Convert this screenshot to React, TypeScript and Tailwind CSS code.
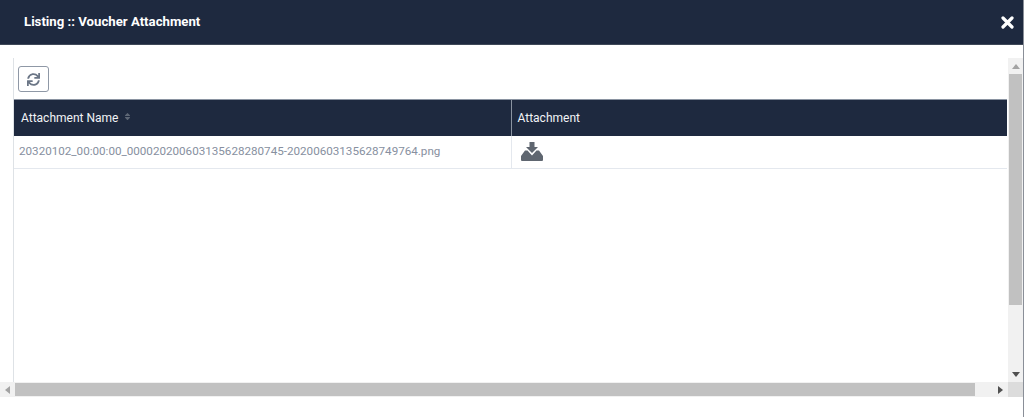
import React from 'react';
import { FaSync, FaSort } from 'react-icons/fa';

function Arrow({ dir }: { dir: 'up' | 'down' | 'left' | 'right' }) {
  const points = {
    up: '0,5 4,0 8,5',
    down: '0,0 8,0 4,5',
    left: '5,0 5,8 0,4',
    right: '0,0 5,4 0,8'
  }[dir];
  const box = dir === 'up' || dir === 'down' ? '0 0 8 5' : '0 0 5 8';
  const size = dir === 'up' || dir === 'down' ? 'w-2 h-[5px]' : 'w-[5px] h-2';
  const color = dir === 'up' || dir === 'left' ? 'fill-[#a3a3a3]' : 'fill-[#505050]';
  return (
    <svg viewBox={box} className={`${size} ${color}`}>
      <polygon points={points} />
    </svg>
  );
}

function DownloadIcon() {
  return (
    <svg viewBox="0 0 22 19" className="w-[22px] h-[19px] fill-[#5f6670]">
      <path d="M8.5 0H13.5V5H17L11 11L5 5H8.5Z" />
      <path d="M0 14L4 8.5H6.5L11 13.5L15.5 8.5H18L22 14V18Q22 19 21 19H1Q0 19 0 18Z" />
    </svg>
  );
}

export default function App() {
  return (
    <div className="w-[1024px] h-[417px] overflow-hidden bg-white flex flex-col border-r border-[#8a8f98] font-['Roboto',sans-serif]">
      <div className="h-[45px] shrink-0 bg-[#1e293f] border-b border-[#3f4858] flex items-center justify-between pl-6 pr-[9px]">
        <h4 className="text-[13.2px] font-bold text-white leading-none">Listing :: Voucher Attachment</h4>
        <svg viewBox="0 0 13 13" className="w-[13px] h-[13px] stroke-white">
          <path d="M2 2L11 11M11 2L2 11" strokeWidth="3.2" strokeLinecap="round" />
        </svg>
      </div>

      <div className="pt-[13px] pl-[13px] flex flex-col">
        <div className="h-[324px] flex border-l border-[#dee2e6]">
          <div className="w-[994px] shrink-0 flex flex-col">
            <div className="pt-2 pl-1 h-[41px] shrink-0">
              <button className="w-[31px] h-[26px] rounded-[3px] border border-[#8f98a6] bg-white flex items-center justify-center">
                <FaSync className="w-[13px] h-[13px] text-[#6b7686]" />
              </button>
            </div>
            <table className="w-[993px] table-fixed border-collapse text-[12px]">
              <thead>
                <tr className="h-[36px] bg-[#1e293f] text-[#f1f3f6] border-t border-[#8a93a1]">
                  <th className="w-[497px] border-r border-[#8a93a1] px-[7px] text-left font-normal">
                    <span className="inline-flex items-center gap-[6px]">
                      Attachment Name
                      <FaSort className="w-[7px] h-[9px] text-[#5d6675] -mt-[3px]" />
                    </span>
                  </th>
                  <th className="px-[6px] text-left font-normal">Attachment</th>
                </tr>
              </thead>
              <tbody>
                <tr className="h-[33px] border-b border-[#e4e8ee]">
                  <td className="border-r border-[#e4e8ee] pl-[5px] text-[11.65px] text-[#8790a0] whitespace-nowrap">
                    20320102_00:00:00_000020200603135628280745-20200603135628749764.png
                  </td>
                  <td className="pl-[9px]">
                    <div className="-mt-[1px]">
                      <DownloadIcon />
                    </div>
                  </td>
                </tr>
              </tbody>
            </table>
          </div>

          {/* vertical scrollbar */}
          <div className="w-[15px] shrink-0 bg-[#f1f1f1] flex flex-col">
            <div className="h-[16px] flex items-center justify-center">
              <Arrow dir="up" />
            </div>
            <div className="h-[231px] mx-[1px] bg-[#c1c1c1]" />
            <div className="flex-1" />
            <div className="h-[16px] flex items-center justify-center">
              <Arrow dir="down" />
            </div>
          </div>
        </div>

        {/* horizontal scrollbar */}
        <div className="h-[15px] -ml-[13px] flex bg-[#f1f1f1]">
          <div className="w-[15px] flex items-center justify-center">
            <Arrow dir="left" />
          </div>
          <div className="w-[960px] my-[1px] bg-[#c1c1c1]" />
          <div className="w-[33px] flex items-center justify-end pr-[5px]">
            <Arrow dir="right" />
          </div>
          <div className="w-[15px] bg-[#dcdcdc]" />
        </div>
      </div>
    </div>
  );
}
